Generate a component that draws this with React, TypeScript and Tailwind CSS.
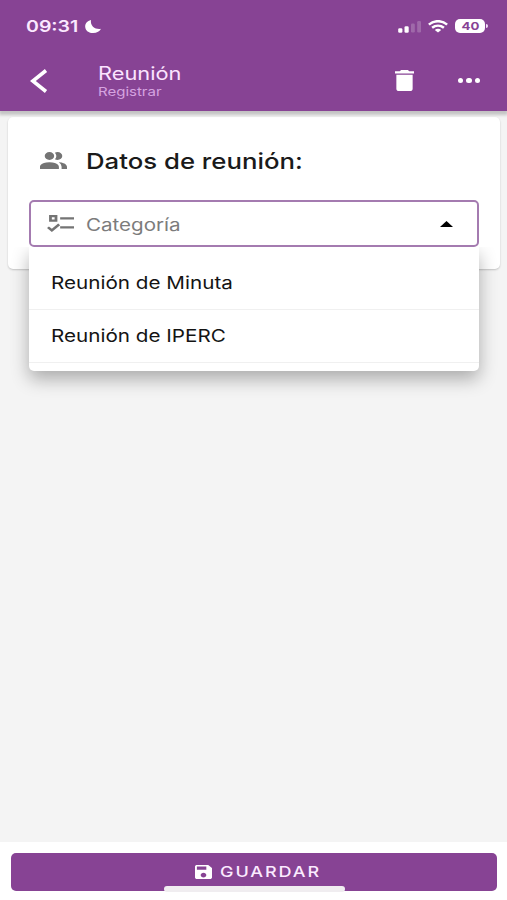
import { useState } from "react";

const categories = ["Reunión de Minuta", "Reunión de IPERC"];

function StatusBar() {
  return (
    <div className="h-[52px] pl-[26px] pr-[19px] flex items-center justify-between">
      <div className="flex items-center">
        <div className="w-[59px]">
          <span className="inline-block origin-left scale-x-[1.22] text-[16px] leading-5 font-semibold text-[#fbe9ff]">09:31</span>
        </div>
        <svg className="w-4 h-[13px]" viewBox="0 0 16 13" fill="#fff">
          <path d="M6 0C2.200 1 0 3.600 0.200 6.900 0.500 10.500 3.700 13 8.200 13c3.700 0 6.700-1.600 7.800-4.200C11 9.800 4.800 6.500 6 0z" />
        </svg>
      </div>
      <div className="flex items-center">
        <svg className="w-6 h-[13px]" viewBox="0 0 24 13" fill="#fff">
          <rect x="0.200" y="8.200" width="4.200" height="4.500" rx="1.300" />
          <rect x="6.500" y="6.200" width="4.200" height="6.500" rx="1.300" />
          <g opacity="0.2">
            <rect x="13" y="3.500" width="3.800" height="9" rx="1.300" />
            <rect x="19.200" y="1" width="3.800" height="11.500" rx="1.300" />
          </g>
        </svg>
        <svg className="w-5 h-[13px] ml-[6px]" viewBox="0 0 20 13" fill="none" stroke="#fff" strokeWidth="2.500">
          <path d="M0.900 4.700C6 0 14 0 19.100 4.700" />
          <path d="M4.100 7.800c3.500-2.900 8.300-2.900 11.800 0" />
          <path d="M10 12.600L6.800 9.900c1.900-1.500 4.500-1.500 6.400 0z" fill="#fff" stroke="none" />
        </svg>
        <div className="ml-[7px] w-[30px] h-[14px] rounded-[5px] bg-white flex items-center justify-center">
          <span className="inline-block pt-px scale-x-[1.2] text-[11px] leading-none font-bold text-[#874394]">40</span>
        </div>
        <div className="w-[2px] h-1 ml-px rounded-r-full bg-[#f3dff7]" />
      </div>
    </div>
  );
}

export default function App() {
  const [open, setOpen] = useState(true);
  const [category, setCategory] = useState("");

  function handleSelect(value: string) {
    setCategory(value);
    setOpen(false);
  }

  return (
    <div className="h-[900px] w-full flex flex-col overflow-hidden bg-[#f4f4f4] font-['Inter',sans-serif]">
      {/* Header */}
      <header className="relative z-10 h-[111px] shrink-0 bg-[#874394] shadow-[0_3px_3px_1px_rgba(0,0,0,0.2)]">
        <StatusBar />
        <div className="h-[58px] pl-[30px] pr-[27px] flex items-center">
          <button className="w-[68px]">
            <svg className="w-[18px] h-6" viewBox="0 0 18 24" fill="none" stroke="#fff" strokeWidth="3.600">
              <path d="M16 1.500L2.800 12L16 22.500" />
            </svg>
          </button>
          <div className="flex-1 pt-[2px] flex flex-col items-start">
            <h1 className="origin-left scale-x-[1.210] text-[18px] leading-5 text-[#fbe4ff]">Reunión</h1>
            <p className="origin-left scale-x-[1.250] text-[12px] leading-4 text-[#d6a3e0]">Registrar</p>
          </div>
          <button className="pb-[2px]">
            <svg className="w-[19px] h-[21px]" viewBox="5 3 14 18" preserveAspectRatio="none" fill="#fff">
              <path d="M19,4H15.5L14.5,3H9.5L8.5,4H5V6H19M6,19A2,2 0 0,0 8,21H16A2,2 0 0,0 18,19V7H6V19Z" />
            </svg>
          </button>
          <button className="ml-[44px] pb-px flex gap-[3px]">
            <span className="w-[5.500px] h-[5px] rounded-full bg-white" />
            <span className="w-[5.500px] h-[5px] rounded-full bg-white" />
            <span className="w-[5.500px] h-[5px] rounded-full bg-white" />
          </button>
        </div>
      </header>

      {/* Form */}
      <main className="flex-1 pt-[6px] pl-2 pr-[7px]">
        <section className="h-[152px] px-[21px] rounded-[5px] bg-white shadow-[0_1px_2px_rgba(0,0,0,0.2)]">
          <div className="h-[83px] pt-1 pl-[11px] flex items-center">
            <svg className="w-[27px] h-[17px]" viewBox="2 4 20 15" preserveAspectRatio="none" fill="#747474">
              <path d="M16 17V19H2V17S2 13 9 13 16 17 16 17M12.5 7.5A3.5 3.5 0 1 0 9 11A3.5 3.5 0 0 0 12.5 7.5M15.94 13A5.32 5.32 0 0 1 18 17V19H22V17S22 13.37 15.94 13M15 4A3.39 3.39 0 0 0 13.07 4.59A5 5 0 0 1 13.07 10.41A3.39 3.39 0 0 0 15 11A3.5 3.5 0 0 0 15 4Z" />
            </svg>
            <h2 className="ml-[19px] origin-left scale-x-[1.170] text-[22px] leading-7 font-medium text-[#1a1a1a]">Datos de reunión:</h2>
          </div>

          <div className="relative">
            <button
              onClick={() => setOpen(!open)}
              className="w-full h-[47px] pl-4 pr-6 rounded-[5px] border-2 border-[#a47bb0] bg-white flex items-center"
            >
              <svg className="w-[27px] h-[17px]" viewBox="1.500 5 19.500 15" preserveAspectRatio="none" fill="#747474">
                <path d="M3 5H9V11H3V5M5 7V9H7V7H5M11 7H21V9H11V7M11 15H21V17H11V15M5 20L1.5 16.5L2.91 15.09L5 17.17L9.59 12.59L11 14L5 20Z" />
              </svg>
              <span className="ml-3 pt-[2px] origin-left scale-x-[1.210] text-[17px] leading-6 text-[#7c7c7c]">{category || "Categoría"}</span>
              <svg className="ml-auto w-[13px] h-[6px]" viewBox="0 0 14 6" preserveAspectRatio="none" fill="#000">
                <path d="M0 6L7 0L14 6z" />
              </svg>
            </button>

            {open && (
              <ul className="absolute top-[47px] left-0 w-full h-[124px] rounded-b-[5px] bg-white shadow-[0_8px_18px_rgba(0,0,0,0.3)] [clip-path:inset(0_-30px_-40px_-30px)]">
                {categories.map((c) => (
                  <li
                    key={c}
                    onClick={() => handleSelect(c)}
                    className="first:h-[63px] first:pt-[9px] h-[53px] pl-[22px] flex items-center border-b border-[#f0f0f0]"
                  >
                    <span className="origin-left scale-x-[1.180] text-[17.500px] leading-6 text-[#141414]">{c}</span>
                  </li>
                ))}
              </ul>
            )}
          </div>
        </section>
      </main>

      {/* Save */}
      <footer className="relative h-[58px] shrink-0 pt-[11px] pl-[11px] pr-[10px] bg-white">
        <button className="w-full h-[38px] pl-[184px] rounded-[5px] bg-[#874394] flex items-center">
          <svg className="w-[17px] h-[14px]" viewBox="3 3 18 18" preserveAspectRatio="none" fill="#fff">
            <path d="M17 3H5c-1.110 0-2 .9-2 2v14c0 1.100.89 2 2 2h14c1.100 0 2-.9 2-2V7l-4-4zm-5 16c-1.660 0-3-1.340-3-3s1.340-3 3-3 3 1.340 3 3-1.340 3-3 3zm3-10H5V5h10v4z" />
          </svg>
          <span className="ml-2 origin-left scale-x-[1.2] text-[15px] leading-5 font-medium tracking-[1.600px] text-[#fbeaff]">GUARDAR</span>
        </button>
        <div className="absolute bottom-2 left-[164px] w-[181px] h-[6px] rounded-full bg-[#f0edf0]" />
      </footer>
    </div>
  );
}
